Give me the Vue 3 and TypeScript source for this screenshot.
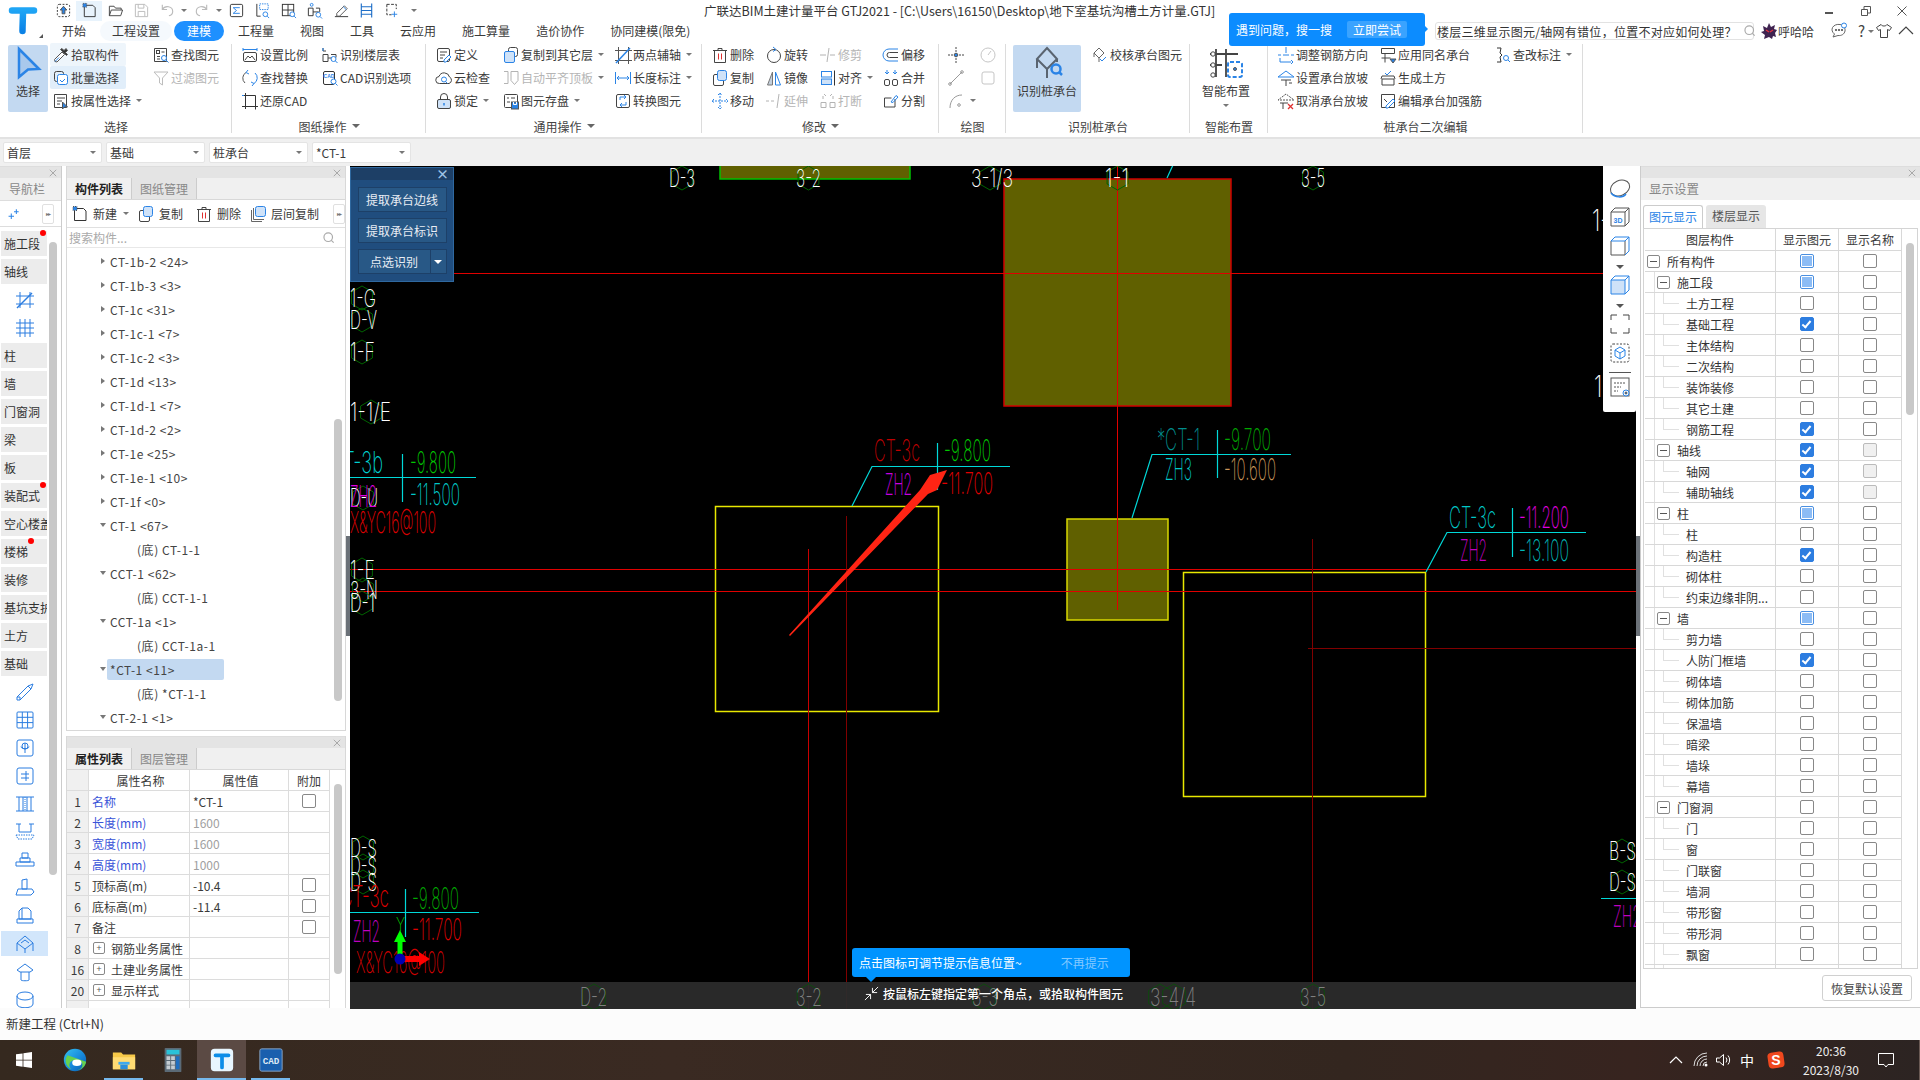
<template>
  <div class="app">
    <!-- title + tabs -->
    <header class="top">
      <div class="logoBox">
        <svg class="logo" viewBox="0 0 32 32" v-html="logoSvg"></svg>
        <i class="logoCaret"></i>
      </div>
      <div class="topCol">
        <div class="quickRow">
          <span v-for="q in quick" :key="q.w + q.i" class="quickCell" :class="{ pale: q.i === 'newDoc' }" :style="{ width: q.w + 'px' }">
            <svg v-if="q.i !== 'caret'" class="ic16" viewBox="0 0 18 18" v-html="icons[q.i]"></svg>
            <i v-else class="miniCaret"></i>
          </span>
          <span class="appTitle">广联达BIM土建计量平台 GTJ2021 - [C:\Users\16150\Desktop\地下室基坑沟槽土方计量.GTJ]</span>
          <div class="winBtns">
            <svg viewBox="0 0 12 12"><path d="M1 8h8" stroke-width="2" /></svg>
            <svg viewBox="0 0 12 12"><path d="M1.500 4.500h6v6h-6zM4 4V1.500h6.500V8H8" /></svg>
            <svg viewBox="0 0 12 12"><path d="M1.500 1.500l9 9M10.500 1.500l-9 9" /></svg>
          </div>
        </div>
        <div class="tabRow">
          <span v-for="t in tabs" :key="t" class="tab" :class="{ on: t === '建模', pale: t === '工程设置' }">{{ t }}</span>
          <div class="tabRight">
            <div class="searchBox">
              <span class="searchText">楼层三维显示图元/轴网有错位，位置不对应如何处理？</span>
              <svg class="ic14" viewBox="0 0 18 18"><circle cx="8" cy="8" r="5.500" stroke="#aaa" stroke-width="1.500" /><path d="M12 12l3 3" stroke="#aaa" stroke-width="1.500" /></svg>
            </div>
            <svg class="ghost" viewBox="0 0 18 18" v-html="ghostSvg"></svg>
            <span class="userName">呼哈哈</span>
            <svg class="ic18 chat" viewBox="0 0 18 18" v-html="icons.chat"></svg>
            <span class="help">?</span><i class="miniCaret helpCaret"></i>
            <svg class="ic18 shirt" viewBox="0 0 18 18" v-html="icons.shirt"></svg>
            <svg class="ic18 fold" viewBox="0 0 18 18"><path d="M2 12l7-7 7 7" stroke="#444" stroke-width="1.200" /></svg>
          </div>
        </div>
      </div>
      <div class="promo">
        <span>遇到问题，搜一搜</span>
        <span class="promoBtn">立即尝试</span>
      </div>
    </header>

    <!-- ribbon -->
    <section class="ribbon">
      <div v-for="g in groups" :key="g.label" class="group" :style="{ width: g.w + 'px' }">
        <div class="groupBody" :style="{ paddingLeft: g.pad + 'px' }">
          <div v-if="g.big" class="bigBtn" :class="{ sel: g.big.sel }" :style="{ width: g.big.w + 'px', marginRight: g.big.mr + 'px' }">
            <svg viewBox="0 0 36 36" v-html="icons[g.big.i]"></svg>
            <span>{{ g.big.t }}</span>
            <i v-if="g.big.caret" class="miniCaret"></i>
          </div>
          <div v-for="(c, ci) in g.cols" :key="ci" class="ribCol" :style="{ width: c.w + 'px' }">
            <div v-for="it in c.items" :key="it.i + it.t" class="ribItem" :class="[it.hl, { dis: it.dis }]" :style="{ width: it.hl ? '76px' : 'auto' }">
              <svg class="ic18" viewBox="0 0 18 18" v-html="icons[it.i]"></svg>
              <span v-if="it.t" class="ribText">{{ it.t }}</span>
              <i v-if="it.caret" class="miniCaret"></i>
            </div>
          </div>
        </div>
        <div class="groupLabel">{{ g.label }}<i v-if="g.caret" class="miniCaret lab"></i></div>
      </div>
    </section>

    <!-- floor / type selects -->
    <section class="pickBar">
      <div v-for="s in selects" :key="s" class="pick"><span>{{ s }}</span><i class="miniCaret"></i></div>
    </section>

    <main class="mainRow">
      <!-- nav column -->
      <aside class="nav">
        <div class="strip"><svg class="closeX" viewBox="0 0 10 10"><path d="M1 1l8 8M9 1l-8 8" /></svg></div>
        <div class="navTitle">导航栏</div>
        <div class="navTool">
          <svg class="ic14" viewBox="0 0 18 18"><path d="M2 12h7M5.500 8.500v7M12 3v6M9 6h6" stroke="#2b84e6" stroke-width="1.300" /></svg>
          <span class="moreBtn">▸▸</span>
        </div>
        <div class="navBody">
          <div class="navList">
            <template v-for="n in navItems" :key="n.k">
              <div v-if="n.t" class="navText">
                <span>{{ n.t }}</span><i v-if="n.dot" class="redDot" :style="{ left: n.dot + 'px' }"></i>
              </div>
              <div v-else class="navIcon" :class="{ on: n.on }">
                <svg viewBox="0 0 20 20" v-html="navIcons[n.i!]"></svg>
              </div>
            </template>
          </div>
          <div class="navTrack"><div class="navThumb"></div></div>
        </div>
      </aside>

      <!-- component + property panels -->
      <div class="leftCol">
        <section class="panel compPanel">
          <div class="strip"><svg class="closeX" viewBox="0 0 10 10"><path d="M1 1l8 8M9 1l-8 8" /></svg></div>
          <div class="tabs2"><span class="t2 on">构件列表</span><span class="t2">图纸管理</span></div>
          <div class="compTool">
            <span class="ctBtn w53"><svg class="ic18" viewBox="0 0 18 18" v-html="icons.newDoc"></svg>新建<i class="miniCaret"></i></span>
            <span class="ctBtn w58"><svg class="ic18" viewBox="0 0 18 18" v-html="icons.copy"></svg>复制</span>
            <span class="ctBtn w55"><svg class="ic18" viewBox="0 0 18 18" v-html="icons.del"></svg>删除</span>
            <span class="ctBtn w82"><svg class="ic18" viewBox="0 0 18 18" v-html="icons.copy2"></svg>层间复制</span>
            <span class="moreBtn">▸▸</span>
          </div>
          <div class="compSearch">
            <span>搜索构件...</span>
            <svg class="ic14" viewBox="0 0 18 18"><circle cx="8" cy="8" r="5.500" stroke="#aaa" stroke-width="1.500" /><path d="M12 12l3 3" stroke="#aaa" stroke-width="1.500" /></svg>
          </div>
          <div class="treeWrap">
            <div class="tree">
              <div v-for="r in treeRows" :key="r.t" class="treeRow" :class="{ child: r.child }">
                <i v-if="r.c" class="tc" :class="r.c"></i>
                <span :class="{ sel: r.sel }">{{ r.t }}</span>
              </div>
            </div>
            <div class="treeThumb"></div>
          </div>
        </section>

        <section class="panel propPanel">
          <div class="strip"><svg class="closeX" viewBox="0 0 10 10"><path d="M1 1l8 8M9 1l-8 8" /></svg></div>
          <div class="tabs2"><span class="t2 on">属性列表</span><span class="t2">图层管理</span></div>
          <div class="propWrap">
            <div class="propTable">
              <div class="propRow head"><span class="pIdx"></span><span class="pName">属性名称</span><span class="pVal">属性值</span><span class="pAdd">附加</span></div>
              <div v-for="p in props2" :key="p.n" class="propRow">
                <span class="pIdx">{{ p.n }}</span>
                <span class="pName" :class="{ blue: p.blue }"><i v-if="p.plus" class="plusBox">+</i>{{ p.name }}</span>
                <span class="pVal" :class="{ grayV: p.gray }">{{ p.val }}</span>
                <span class="pAdd"><i v-if="p.cb" class="cb"></i></span>
              </div>
            </div>
            <div class="propThumb"></div>
          </div>
        </section>
      </div>

      <div class="splitter"><i></i></div>

      <!-- drawing canvas -->
      <section class="canvas">
        <svg class="cad" viewBox="350 166 1286 843">
          <rect x="720" y="160" width="190" height="19" fill="#606000" stroke="#00c000" stroke-width="1.500" />
          <rect x="1004" y="179" width="227" height="227" fill="#606000" stroke="#d00000" stroke-width="1.500" />
          <rect x="1067" y="519" width="101" height="101" fill="#606000" stroke="#d8d800" stroke-width="1.500" />
          <rect x="715.500" y="506.500" width="223" height="205" fill="none" stroke="#e8e800" stroke-width="1.500" />
          <rect x="1183.500" y="572.500" width="242" height="224" fill="none" stroke="#e8e800" stroke-width="1.500" />
          <path d="M350 273.500H1636M350 569.500H1636M350 591.500H1636" stroke="#e00000" stroke-width="1.200" fill="none" />
          <path d="M1117.500 166V610" stroke="#e00000" fill="none" />
          <path d="M808.500 549V1009" stroke="#c80000" fill="none" />
          <path d="M846.500 516V1009M1312.500 539V1009M1308 648.500H1636" stroke="#800000" fill="none" />

          <!-- leaders -->
          <g v-for="(l, i) in leaders" :key="i" fill="none" :stroke="l.c" stroke-width="1.200"><path :d="l.d" /></g>

          <!-- grid bubbles -->
          <g v-for="h in hexes" :key="h.t + h.x + h.y">
            <polygon :points="hexPts(h.hx, h.y, 12)" fill="none" stroke="#006400" />
            <text class="cadText" :x="h.x" :y="h.y + 9" :textLength="h.w" lengthAdjust="spacingAndGlyphs" font-size="25" fill="#fff">{{ h.t }}</text>
          </g>

          <!-- annotation texts -->
          <text v-for="t in cadTexts" :key="t.t + t.x + t.y" class="cadText" :x="t.x" :y="t.y" :textLength="t.w" lengthAdjust="spacingAndGlyphs" font-size="30" :fill="t.c">{{ t.t }}</text>

          <!-- red markup arrow -->
          <polygon points="789,635 920,490 930,475 947,470 937,490 928,494 790,636" fill="#ff2414" />

          <!-- ucs -->
          <text class="cadText" x="396" y="931" textLength="9" lengthAdjust="spacingAndGlyphs" font-size="19" fill="#00d000">Y</text>
          <path d="M397.500 960V942h-3.500l6-12 6 12h-3.500v18z" fill="#00ff00" />
          <path d="M402 956h17v-4l11 7-11 7v-4h-17z" fill="#ff0000" />
          <circle cx="400" cy="959" r="5.500" fill="#0000b0" />

          <!-- bottom strip -->
          <rect x="350" y="982" width="1286" height="27" fill="#2b2b2b" fill-opacity=".95" />
          <g v-for="h in dimHexes" :key="h.t">
            <polygon v-for="hx in h.hx" :key="hx" :points="hexPts(hx, 997, 13)" fill="none" stroke="#0e4a0e" />
            <text class="cadText" :x="h.x" y="1006" :textLength="h.w" lengthAdjust="spacingAndGlyphs" font-size="25" fill="#808080">{{ h.t }}</text>
          </g>
        </svg>

        <!-- cad-recognition float -->
        <div class="floatBox">
          <div class="floatHead">×</div>
          <div class="floatBtn">提取承台边线</div>
          <div class="floatBtn">提取承台标识</div>
          <div class="floatSplit"><span>点选识别</span><span class="floatArrow"><i></i></span></div>
        </div>

        <!-- view toolbar -->
        <div class="viewBar">
          <svg v-for="(v, n) in viewIcons" :key="n" :viewBox="v.vb ?? '0 0 24 24'" :class="v.cls" v-html="icons[v.i]"></svg>
        </div>

        <div class="tip">
          <span>点击图标可调节提示信息位置~</span>
          <span class="tipOff">不再提示</span>
        </div>
        <div class="hint">
          <svg viewBox="0 0 16 16"><path d="M9 7l6-6M9 2v5h5M7 9l-6 6M2 9h5v5" fill="none" stroke="#fff" /></svg>
          <span>按鼠标左键指定第一个角点，或拾取构件图元</span>
        </div>
      </section>

      <div class="splitter"><i></i></div>

      <!-- display settings -->
      <aside class="rightPanel">
        <div class="strip"><svg class="closeX" viewBox="0 0 10 10"><path d="M1 1l8 8M9 1l-8 8" /></svg></div>
        <div class="rpTitle">显示设置</div>
        <div class="rpTabs"><span class="rpTab on">图元显示</span><span class="rpTab">楼层显示</span></div>
        <div class="rpTableBox">
          <div class="rpTable">
            <div class="rpRow rpHead"><span class="rName">图层构件</span><span class="rCell">显示图元</span><span class="rCell">显示名称</span></div>
            <div v-for="(r, i) in layerRows" :key="i" class="rpRow">
              <span class="rName" :class="'lv' + r.lv">
                <i v-if="r.lv < 2" class="minusBox"></i>
                {{ r.t }}
              </span>
              <span class="rCell"><i class="cb" :class="{ chk: r.s === 1, part: r.s === 2 }"></i></span>
              <span class="rCell"><i class="cb" :class="{ off: r.off }"></i></span>
            </div>
          </div>
          <div class="rpThumb"></div>
        </div>
        <div class="rpFoot"><span class="resetBtn">恢复默认设置</span></div>
      </aside>
    </main>

    <footer class="status">新建工程 (Ctrl+N)</footer>

    <!-- windows taskbar -->
    <footer class="taskbar">
      <svg class="win" viewBox="0 0 16 16"><path d="M0 2.300l6.600-.9v6.300H0zM7.400 1.300L16 0v7.700H7.400zM0 8.400h6.600v6.300L0 13.800zM7.400 8.400H16V16l-8.600-1.200z" fill="#fff" /></svg>
      <div class="tbCell"><svg viewBox="0 0 28 28" v-html="edgeSvg"></svg></div>
      <div class="tbCell run"><svg viewBox="0 0 28 28" v-html="folderSvg"></svg></div>
      <div class="tbCell"><svg viewBox="0 0 28 28" v-html="calcSvg"></svg></div>
      <div class="tbCell run active"><svg viewBox="0 0 28 28" v-html="gtjSvg"></svg></div>
      <div class="tbCell run"><svg viewBox="0 0 28 28" v-html="cadSvg"></svg></div>
      <div class="tray">
        <svg class="tr" viewBox="0 0 16 16"><path d="M2 11l6-6 6 6" fill="none" stroke="#fff" stroke-width="1.200" /></svg>
        <svg class="tr net" viewBox="0 0 16 16"><path d="M1 14a13 13 0 0 1 13-13M4 14A10 10 0 0 1 14 4M7 14a7 7 0 0 1 7-7M10 14a4 4 0 0 1 4-4" fill="none" stroke="#ddd" /><circle cx="13" cy="13" r="1.500" fill="#fff" /></svg>
        <svg class="tr" viewBox="0 0 16 16"><path d="M1.500 6h3l4-3.500v11l-4-3.500h-3zM11 5.500a4 4 0 0 1 0 5M13 3.500a7 7 0 0 1 0 9" fill="none" stroke="#fff" /></svg>
        <span class="ime">中</span>
        <svg class="sogou" viewBox="0 0 18 18"><rect x="1" y="1" width="16" height="16" rx="4" fill="#f0481e" transform="rotate(-8 9 9)" /><text x="9" y="14" text-anchor="middle" font-size="14" font-weight="700" fill="#fff" font-family="Liberation Sans">S</text></svg>
        <div class="clock"><span>20:36</span><span>2023/8/30</span></div>
        <svg class="notif" viewBox="0 0 18 18"><path d="M1.500 2.500h15v11H11l-2 2.500-2-2.500H1.500z" fill="none" stroke="#fff" /></svg>
        <i class="peek"></i>
      </div>
    </footer>
  </div>
</template>

<script setup lang="ts">
const B = "#2b84e6";
const L = "#cfe2f8";

const icons: Record<string, string> = {
  up: `<rect x="2.500" y="2.500" width="13" height="13" rx="2" stroke="#333" stroke-dasharray="2 1.500"/><path d="M9 4.500l3.500 4h-2v4h-3v-4h-2z" fill="${B}"/>`,
  newDoc: `<path d="M3.500 3.500h9l2.500 2.500v9.500h-11.500z" stroke="#333"/><rect x="2" y="1.500" width="4" height="4" fill="${B}" stroke-dasharray="1 1"/>`,
  open: `<path d="M2.500 14.500v-10h5l1.500 2h6v2M2.500 14.500l2-6h12l-2 6z" stroke="#444"/>`,
  save: `<path d="M2.500 2.500h10l3 3v10h-13zM5.500 2.500v4h6v-4M5.500 15v-5h7v5" stroke="#bbb"/>`,
  undo: `<path d="M3.500 3v5h5M3.500 8c3-5 11-3.500 11 2 0 2-1.500 4-4 4.500" stroke="#bbb" stroke-width="1.200"/>`,
  redo: `<path d="M14.500 3v5h-5M14.500 8c-3-5-11-3.500-11 2 0 2 1.500 4 4 4.500" stroke="#bbb" stroke-width="1.200"/>`,
  sigma: `<rect x="2.500" y="2.500" width="13" height="13" rx="1.500" stroke="#333"/><path d="M12.500 6h-7l3.500 3-3.500 3h7" stroke="${B}"/>`,
  calcTbl: `<path d="M3 2v13h4" stroke="#333"/><rect x="6" y="2" width="9" height="6" stroke="${B}" stroke-dasharray="1.500 1"/><circle cx="12" cy="13" r="2.500" stroke="${B}"/><path d="M14 15l2 2" stroke="${B}"/>`,
  tblQ: `<rect x="2.500" y="2.500" width="12" height="12" stroke="#333"/><path d="M2.500 8.500h12M8.500 2.500v12" stroke="#333"/><circle cx="13" cy="13" r="2.500" fill="#fff" stroke="${B}"/><path d="M15 15l2 2" stroke="${B}"/>`,
  tblQ2: `<path d="M2.500 6.500h5v8h-5zM7.500 10.500h6M10.500 6.500h4v4" stroke="#333"/><circle cx="6" cy="3" r="1.500" stroke="${B}"/><circle cx="13" cy="13.500" r="2.500" stroke="${B}"/><path d="M15 15.500l2 2" stroke="${B}"/>`,
  pen: `<path d="M2 15.500h14" stroke="#333"/><path d="M4 12l8-8 3 3-8 8H4z" stroke="#555"/><path d="M11 5l3 3" stroke="${B}"/>`,
  ruler: `<path d="M3.500 1.500v15M14.500 1.500v15M3.500 5h11M3.500 9h11M3.500 13h11" stroke="#1f6fc8" stroke-width="1.200"/>`,
  frameQ: `<path d="M3 2.500h10v5M3 2.500v11h5" stroke="#333" stroke-dasharray="3 1.500"/><path d="M11 10v6M8 13h6" stroke="${B}"/>`,
  chat: `<path d="M3 15l1.500-3C2 10 1.500 8 2.500 5.500 4 3 7 2 10 2.500c3.500.7 5.500 3.500 5 6.500-.5 3-3.500 5-7 4.500z" stroke="#666"/><circle cx="6" cy="8" r=".7" fill="#666"/><circle cx="9" cy="8" r=".7" fill="#666"/><circle cx="12" cy="8" r=".7" fill="#666"/><circle cx="14" cy="3.500" r="2.500" fill="#fff" stroke="${B}"/>`,
  shirt: `<path d="M6 2.500L1.500 5.500l2 3 2-1v8h7v-8l2 1 2-3-4.500-3c-1 2-5 2-6 0z" stroke="#444"/>`,
  pick: `<path d="M3 15.500l-.5-2 7.500-7.500 2.500 2.500-7.500 7.500z" fill="#fff" stroke="#555"/><path d="M8.500 3.500l6 6 1-1-2-2 2-2-1.500-2-2 2-2-2z" fill="#333"/><path d="M3 15.500l4-4" stroke="${B}"/>`,
  batch: `<rect x="2.500" y="2.500" width="9" height="10" rx="2" stroke="#444"/><rect x="5.500" y="5.500" width="10" height="10" rx="2" fill="#fff" stroke="${B}"/><path d="M8 11l2 2 3-3" stroke="${B}"/>`,
  attr: `<path d="M2.500 2.500h12v13h-12z" stroke="#444"/><path d="M5 6h8M5 9h5M5 12h3" stroke="#444"/><path d="M10.500 10v7l2-2h3z" fill="${B}"/>`,
  find: `<path d="M2.500 2.500h12v13h-12z" stroke="#444"/><rect x="4.500" y="4.500" width="3" height="3" stroke="#444"/><path d="M9.500 6h3M5 10.500h3M5 13h3" stroke="#444"/><circle cx="12" cy="12" r="2.500" fill="#fff" stroke="${B}"/><path d="M14 14l2.500 2.500" stroke="${B}"/>`,
  filter: `<path d="M2 3h14l-5.500 6v7l-3-2V9z" stroke="#888"/>`,
  scale: `<path d="M2 2v3M16 2v3M2 3.500h14" stroke="${B}"/><rect x="2.500" y="6.500" width="13" height="9" rx="1.500" stroke="#444"/><path d="M4 14l3-4 2 2 2-2 3 4" stroke="#444"/>`,
  floorT: `<path d="M2 2v3h3M2 8.500h5v7H2zM7 12h6M10 8.500h5v3" stroke="#444"/><path d="M2 5V2" stroke="${B}"/><circle cx="12.500" cy="13" r="2.500" fill="#fff" stroke="${B}"/><path d="M14.500 15l2 2" stroke="${B}"/>`,
  replace: `<path d="M5 3.500a6.500 6.500 0 0 0-1 10.500" stroke="#555"/><path d="M13 14.500a6.500 6.500 0 0 0 1-10.500" stroke="${B}"/><path d="M7 1L5 3.500 8 5M11 17l2-2.500L10 13" stroke="${B}"/>`,
  cadOpt: `<rect x="2.500" y="2.500" width="11" height="13" rx="1.500" stroke="#333"/><circle cx="12.500" cy="12.500" r="2.500" fill="#fff" stroke="${B}"/><path d="M14.500 14.500l2 2" stroke="${B}"/><text x="8" y="8.500" font-size="5" font-weight="700" text-anchor="middle" fill="${B}" stroke="none" font-family="Liberation Sans">CAD</text>`,
  restore: `<path d="M1 14.500h16M4.500 1v16M3 3.500h11.500v14" stroke="#333"/><path d="M1 3.500h2" stroke="${B}"/>`,
  def: `<rect x="2.500" y="2.500" width="12" height="13" rx="1.500" stroke="#444"/><path d="M5 6h7M5 9h5M5 12h3" stroke="#444"/><path d="M9 14l5-5 2 2-5 5H9z" fill="#fff" stroke="${B}"/>`,
  cloud: `<path d="M4.500 14.500a3.500 3.500 0 0 1-.5-7A5.500 5.500 0 0 1 14.500 8 3.500 3.500 0 0 1 14 14.500z" stroke="#444"/><circle cx="9" cy="10.500" r="2.500" stroke="${B}"/><path d="M10.500 12.500l2 2" stroke="${B}"/>`,
  lock: `<rect x="2.500" y="7.500" width="13" height="9" rx="1.500" fill="${L}" stroke="#444"/><path d="M5.500 7.500V5a3.500 3.500 0 0 1 7 0v2.500" stroke="#444"/><path d="M9 11v2.500" stroke="${B}" stroke-width="1.500"/>`,
  copyTo: `<rect x="6.500" y="1.500" width="9" height="9" rx="2" stroke="#444"/><rect x="2.500" y="5.500" width="10" height="11" rx="1.500" fill="${L}" stroke="${B}"/>`,
  alignTop: `<path d="M2 2.500h4v12H2M9 2.500h7v9l-3.500 4-3.500-4z" stroke="#777"/>`,
  save2: `<rect x="2.500" y="2.500" width="13" height="13" rx="1" stroke="#444"/><path d="M5 6h2M9 6h4M5 10h3" stroke="#444"/><rect x="9.500" y="10" width="7" height="7" fill="${B}"/><path d="M11.500 10v2.500h3V10" stroke="#fff"/>`,
  twoAxis: `<path d="M4.500 1v17M14.500 1v17M1 4.500h17M1 14.500h17" stroke="#555"/><path d="M2 17L16 2" stroke="${B}" stroke-width="1.500"/>`,
  dim: `<path d="M1.500 3v12M16.500 3v12M3 9h12M5 7L3 9l2 2M13 7l2 2-2 2" stroke="${B}"/>`,
  convert: `<rect x="2.500" y="2.500" width="13" height="13" rx="1.500" stroke="#444"/><path d="M6 5h6M6 5v3M12 13H6M12 13v-3" stroke="${B}"/><path d="M10 7l2-2-2-2M8 11l-2 2 2 2" stroke="${B}"/>`,
  del: `<path d="M2 4.500h14M7 4.500V2.500h4v2M3.500 4.500v12h11v-12" stroke="#444"/><path d="M7.500 7.500v6M10.500 7.500v6" stroke="#e03030"/>`,
  copy: `<rect x="2.500" y="5.500" width="10" height="11" rx="1.500" stroke="#444"/><rect x="6.500" y="1.500" width="9" height="10" rx="2" fill="${L}" stroke="${B}"/>`,
  copy2: `<path d="M2.500 5v11.500H13M4.500 3v11.500H15" stroke="#666"/><rect x="6.500" y="1.500" width="10" height="10" rx="2" fill="${L}" stroke="${B}"/>`,
  move: `<path d="M9 1v16M1 9h16M7 3l2-2 2 2M7 15l2 2 2-2M3 7L1 9l2 2M15 7l2 2-2 2" stroke="${B}" stroke-dasharray="2 1"/>`,
  rotate: `<circle cx="9" cy="10" r="6.500" stroke="#444"/><path d="M8 1l3 2.500L8 5.500" stroke="${B}"/>`,
  mirror: `<path d="M7.500 3l-5 13h5z" fill="#c3cfdc" stroke="#777"/><path d="M10.500 3l5 13h-5z" stroke="${B}"/>`,
  extend: `<path d="M1 9h3M6 9h3M14 2l-2 14" stroke="#777"/>`,
  trim: `<path d="M1 9h6M10 2L8 16M11 9h5" stroke="#777"/>`,
  align: `<rect x="2.500" y="2.500" width="10" height="5.500" stroke="${B}"/><rect x="2.500" y="10" width="10" height="5.500" fill="${L}" stroke="${B}"/><path d="M15.500 1.500v15" stroke="#333"/>`,
  breakI: `<path d="M2 10.500h5v5H2zM11 10.500h5v5h-5zM4 7V4M14 7V4M7 4l-2-2M11 4l2-2" stroke="#777"/>`,
  offset: `<path d="M16 3H7a6 6 0 0 0 0 12h9" stroke="${B}"/><path d="M16 6.500H7.500a2.500 2.500 0 0 0 0 5H16" stroke="#444"/>`,
  merge: `<rect x="2.500" y="10.500" width="5" height="6" rx="1.500" stroke="#444"/><rect x="10.500" y="10.500" width="5" height="6" rx="1.500" stroke="#444"/><path d="M3 3l2 2 2-2M11 3l2 2 2-2M5 1v4M13 1v4" stroke="${B}"/>`,
  split: `<path d="M13 7v8H2.500V6h7" stroke="#444"/><path d="M9 10l5-6.500 2 1.500-5 5.500z" stroke="${B}"/>`,
  point: `<path d="M9 1v5M9 12v5M1 9h5M12 9h5" stroke="#444" stroke-dasharray="2 1"/><circle cx="9" cy="9" r="1.800" fill="${B}"/>`,
  clock: `<circle cx="9" cy="9" r="7" stroke="#999"/><path d="M9 9l3-4" stroke="#999"/>`,
  line: `<path d="M3 15L15 3" stroke="#999"/><circle cx="3" cy="15" r="1.300" stroke="#999"/><circle cx="15" cy="3" r="1.300" stroke="#999"/>`,
  rect: `<rect x="3" y="3" width="12" height="12" rx="2" stroke="#999"/>`,
  arc: `<path d="M3 16C3 8 8 3 15 3" stroke="#999"/><circle cx="12" cy="13" r="1.300" stroke="#999"/>`,
  pile: `<path d="M18 3l10 11-10 10L8 14z" stroke="#5a6470" stroke-width="2"/><path d="M8 14v9M18 24v9M28 14v3" stroke="#5a6470" stroke-width="2"/><circle cx="27" cy="24" r="4.500" stroke="${B}" stroke-width="2.500"/><path d="M30 27l3 3" stroke="${B}" stroke-width="2.500"/>`,
  check: `<path d="M8 2l5 5-5 5-5-5z" stroke="#666"/><path d="M3 7v4M8 12v4" stroke="#666"/><path d="M9 13l2 2 4-4" stroke="${B}"/>`,
  smart: `<path d="M8 4v28M18 4v28M2 9h28M2 20h12" stroke="#444" stroke-width="1.800"/><circle cx="5" cy="9" r="2.200" fill="#fff" stroke="#444"/><circle cx="5" cy="20" r="2.200" fill="#fff" stroke="#444"/><circle cx="5" cy="30" r="2.200" fill="#fff" stroke="#444"/><rect x="20" y="17" width="14" height="15" rx="2" fill="#fff" stroke="${B}" stroke-width="2" stroke-dasharray="4 2"/><circle cx="27" cy="24" r="1.500" fill="${B}"/>`,
  arrow: `<path d="M9 4l20 20-11 .5-9 7.500z" fill="#a9c8ec" stroke="${B}" stroke-width="2.500"/>`,
  adjust: `<path d="M9 1v6M6 9h6M1 9h3M14 9h3" stroke="${B}"/><path d="M3 12v4h11M14 14l2 2-2 2" stroke="${B}"/>`,
  slope: `<path d="M9 2L1 8h16z" stroke="${B}"/><path d="M4 11h10M9 11v6M12 14l3 0" stroke="#444"/>`,
  slopeX: `<path d="M9 2L1 8h16z" stroke="#555" stroke-dasharray="2 1"/><path d="M3 11h8M6 11v6" stroke="#444"/><path d="M11 12l5 5M16 12l-5 5" stroke="#e03030" stroke-width="1.300"/>`,
  sameName: `<path d="M2.500 2.500h13v5h-13zM6 7.500v9M2.500 12h9" stroke="#444"/><path d="M11 13h6l-3 4z" fill="${B}"/>`,
  earth: `<path d="M3 10h12v6H3zM2 10l1-3h12l1 3" stroke="#444"/><path d="M6 4l2 2 4-4" stroke="${B}"/>`,
  strength: `<path d="M6 2.500h9.500v13H6M6 2.500H2.500v13H6" stroke="#444"/><path d="M7 14l7-7 2 2-7 7H7z" fill="#fff" stroke="${B}"/><path d="M5 7l3 3" stroke="#444"/>`,
  mark: `<path d="M3 2h4l-1 5 2 2-2 2 1 5H3" stroke="#333"/><circle cx="12" cy="12" r="2.500" stroke="${B}"/><path d="M14 14l2 2" stroke="${B}"/>`,
  v1: `<ellipse cx="12" cy="12" rx="10" ry="7.500" transform="rotate(-25 12 12)" stroke="#555"/><path d="M3 17c4 5 12 5 15 1" stroke="${B}" stroke-width="1.500"/>`,
  v2: `<path d="M3 7l4-4h14v14l-4 4H3zM3 7h14v14M17 7l4-4" stroke="#555"/><text x="10" y="18" font-size="7" font-weight="700" text-anchor="middle" fill="${B}" stroke="none" font-family="Liberation Sans">3D</text>`,
  v3: `<path d="M3 7v14h14V7" stroke="#555"/><path d="M3 7l4-4h14v14l-4 4" stroke="${B}"/><path d="M3 7h14M17 7l4-4" stroke="${B}"/>`,
  vCaret: `<path d="M8 10h8l-4 4z" fill="#555" stroke="none"/>`,
  v4: `<path d="M3 7h14v14H3z" fill="${L}" stroke="${B}"/><path d="M3 7l4-4h14v14l-4 4M17 7l4-4" stroke="${B}"/>`,
  v5: `<path d="M3 8V3h6M15 3h6v5M21 16v5h-6M9 21H3v-5" stroke="#444"/>`,
  v6: `<rect x="3" y="3" width="18" height="18" rx="2" stroke="#444" stroke-dasharray="2 1.500"/><path d="M12 6l5 3v6l-5 3-5-3V9zM7 9l5 3 5-3M12 12v6" stroke="${B}"/>`,
  v7: `<rect x="3" y="3" width="18" height="18" stroke="#555"/><path d="M6 8h12M6 12h7M6 16h4" stroke="#555" stroke-dasharray="2 1"/><circle cx="18" cy="18" r="3" fill="#fff" stroke="${B}"/><circle cx="18" cy="18" r="1" fill="${B}"/>`,
  vLine: `<path d="M1 12.500h22" stroke="#555"/>`,
};

const navIcons: Record<string, string> = {
  axis1: `<path d="M1 6h18M1 14h18M5 2v16M15 2v16" /><path d="M2 18L17 3" stroke-width="1.400"/>`,
  axis2: `<path d="M1 5h18M1 10h18M1 15h18M5 1v18M10 1v18M15 1v18" />`,
  bar: `<path d="M2 15L13 4l5-2-2 5L5 18H2zM2 15h3v3M13 4l3 3" />`,
  cells: `<rect x="2" y="2" width="16" height="16" rx="1"/><path d="M2 7.300h16M2 12.600h16M7.300 2v16M12.600 2v16"/>`,
  turn: `<rect x="2" y="2" width="16" height="16" rx="2"/><path d="M10 5v10M6 8.500c0 3 8 3 8 0"/><circle cx="10" cy="8" r="3"/>`,
  cross: `<rect x="2" y="2" width="16" height="16" rx="2"/><path d="M6 8h8M6 12h8M11 5v10"/>`,
  cols: `<path d="M1 3h18M1 17h18M4 3v14M16 3v14M8 3v14M12 3v14" /><path d="M10 3v14" stroke-dasharray="1 1"/>`,
  trough: `<path d="M4 2v8h12V2M1 2h5M14 2h5"/><path d="M1 13h18l-2 4H3z" stroke-dasharray="1.500 1"/>`,
  ped: `<path d="M7 3h6v5H7zM5 8h10v4H5zM1 12h18v4H1z"/>`,
  ped2: `<path d="M7 2l5-1v10H7zM3 11h14l2 3-3 3H1z"/>`,
  ped3: `<path d="M7 2h6l3 3v8H4V5zM2 13h16v4H2zM7 2v11"/>`,
  cap: `<path d="M10 2l8 7-8 6-8-6zM2 9v8M10 15v4M18 9v8"/><path d="M6 9l4-3 4 3"/>`,
  mush: `<path d="M2 8l8-6 8 6-3 2H5zM6 10v8c0 1 8 1 8 0v-8"/>`,
  cyl: `<ellipse cx="10" cy="6" rx="8" ry="4"/><path d="M2 6v8c0 5 16 5 16 0V6"/>`,
};

const logoSvg = `<defs><linearGradient id="tg" x1="0" y1="0" x2="0" y2="1"><stop offset="0" stop-color="#1fa5f5"/><stop offset="1" stop-color="#0b82e6"/></linearGradient></defs><path d="M5 7.500h22M16 8c0 7-.5 13-.5 20" fill="none" stroke="url(#tg)" stroke-width="6.500" stroke-linecap="round"/>`;
const ghostSvg = `<path d="M4 17l1-4-4-3 3-1-1-5 4 2 2-5 2 4 4-2-1 4 3 1-2 3 1 4-3-1-1 3-3-2z" fill="#3f2350"/><path d="M6 8l3 2M13 8l-3 2" stroke="#e03040" stroke-width="1.400"/>`;
const edgeSvg = `<defs><linearGradient id="eg" x1="0" y1="0" x2="1" y2="1"><stop offset="0" stop-color="#35c1f1"/><stop offset=".6" stop-color="#1483d8"/><stop offset="1" stop-color="#0c59a4"/></linearGradient></defs><circle cx="14" cy="14" r="12" fill="url(#eg)"/><path d="M26 16c-1 6-7 10-12 9 4 0 8-2 8-6 0-3-3-5-7-5-4 0-7 2-7 5 0 1 0 3 2 5-6-3-8-10-4-15" fill="#67d24e"/><ellipse cx="16" cy="17" rx="5" ry="3.500" fill="#fff"/>`;
const folderSvg = `<path d="M2 6h9l2 2h13v16H2z" fill="#f7c948"/><path d="M2 11h24v13H2z" fill="#ffdc73"/><path d="M10 19h8v5h-8z" fill="#2a8fdc"/><path d="M8 16h12v3H8z" fill="#3da9ee"/>`;
const calcSvg = `<rect x="5" y="1" width="18" height="26" rx="1" fill="#5b6a76"/><rect x="7" y="3" width="14" height="5" fill="#29c2d8"/><path d="M7 10h4v4H7zM12 10h4v4h-4zM7 15h4v4H7zM12 15h4v4h-4zM7 20h4v4H7zM12 20h4v4h-4z" fill="#c4ccd2"/><path d="M17 10h4v14h-4z" fill="#1f6fc0"/>`;
const gtjSvg = `<rect x="2" y="2" width="24" height="24" rx="4" fill="#e8f6ff"/><path d="M7 9h14M14 9v13" stroke="#0c8de8" stroke-width="4" stroke-linecap="round" fill="none"/>`;
const cadSvg = `<rect x="2" y="2" width="24" height="24" rx="2" fill="#1a5fae" stroke="#8aa6c6"/><text x="14" y="18" font-size="10" font-weight="700" text-anchor="middle" fill="#dfe9f5" font-family="Liberation Mono">CAD</text>`;

const quick = [
  { i: "up", w: 26 }, { i: "newDoc", w: 26 }, { i: "open", w: 26 }, { i: "save", w: 26 }, { i: "undo", w: 26 },
  { i: "caret", w: 8 }, { i: "redo", w: 26 }, { i: "caret", w: 10 }, { i: "sigma", w: 24 }, { i: "calcTbl", w: 28 },
  { i: "tblQ", w: 24 }, { i: "tblQ2", w: 28 }, { i: "pen", w: 26 }, { i: "ruler", w: 25 }, { i: "frameQ", w: 26 }, { i: "caret", w: 18 },
];

const tabs = ["开始", "工程设置", "建模", "工程量", "视图", "工具", "云应用", "施工算量", "造价协作", "协同建模(限免)"];

type RibItem = { t: string; i: string; dis?: boolean; caret?: boolean; hl?: string };
type RibCol = { w: number; items: RibItem[] };
type RibGroup = {
  label: string; caret?: boolean; w: number; pad: number;
  big?: { t: string; i: string; w: number; mr: number; sel?: boolean; caret?: boolean };
  cols: RibCol[];
};

const groups: RibGroup[] = [
  {
    label: "选择", w: 232, pad: 8,
    big: { t: "选择", i: "arrow", w: 40, mr: 2, sel: true },
    cols: [
      { w: 100, items: [{ t: "拾取构件", i: "pick", hl: "hl1" }, { t: "批量选择", i: "batch", hl: "hl2" }, { t: "按属性选择", i: "attr", caret: true }] },
      { w: 80, items: [{ t: "查找图元", i: "find" }, { t: "过滤图元", i: "filter", dis: true }] },
    ],
  },
  {
    label: "图纸操作", caret: true, w: 194, pad: 7,
    cols: [
      { w: 80, items: [{ t: "设置比例", i: "scale" }, { t: "查找替换", i: "replace" }, { t: "还原CAD", i: "restore" }] },
      { w: 100, items: [{ t: "识别楼层表", i: "floorT" }, { t: "CAD识别选项", i: "cadOpt" }] },
    ],
  },
  {
    label: "通用操作", caret: true, w: 276, pad: 7,
    cols: [
      { w: 67, items: [{ t: "定义", i: "def" }, { t: "云检查", i: "cloud" }, { t: "锁定", i: "lock", caret: true }] },
      { w: 112, items: [{ t: "复制到其它层", i: "copyTo", caret: true }, { t: "自动平齐顶板", i: "alignTop", dis: true, caret: true }, { t: "图元存盘", i: "save2", caret: true }] },
      { w: 88, items: [{ t: "两点辅轴", i: "twoAxis", caret: true }, { t: "长度标注", i: "dim", caret: true }, { t: "转换图元", i: "convert" }] },
    ],
  },
  {
    label: "修改", caret: true, w: 237, pad: 7,
    cols: [
      { w: 54, items: [{ t: "删除", i: "del" }, { t: "复制", i: "copy" }, { t: "移动", i: "move" }] },
      { w: 54, items: [{ t: "旋转", i: "rotate" }, { t: "镜像", i: "mirror" }, { t: "延伸", i: "extend", dis: true }] },
      { w: 63, items: [{ t: "修剪", i: "trim", dis: true }, { t: "对齐", i: "align", caret: true }, { t: "打断", i: "breakI", dis: true }] },
      { w: 55, items: [{ t: "偏移", i: "offset" }, { t: "合并", i: "merge" }, { t: "分割", i: "split" }] },
    ],
  },
  {
    label: "绘图", w: 67, pad: 6,
    cols: [
      { w: 32, items: [{ t: "", i: "point" }, { t: "", i: "line" }, { t: "", i: "arc", caret: true }] },
      { w: 24, items: [{ t: "", i: "clock", dis: true }, { t: "", i: "rect", dis: true }] },
    ],
  },
  {
    label: "识别桩承台", w: 184, pad: 7,
    big: { t: "识别桩承台", i: "pile", w: 68, mr: 8, sel: true },
    cols: [{ w: 96, items: [{ t: "校核承台图元", i: "check" }] }],
  },
  {
    label: "智能布置", w: 78, pad: 6,
    big: { t: "智能布置", i: "smart", w: 60, mr: 0, caret: true },
    cols: [],
  },
  {
    label: "桩承台二次编辑", w: 315, pad: 7,
    cols: [
      { w: 102, items: [{ t: "调整钢筋方向", i: "adjust" }, { t: "设置承台放坡", i: "slope" }, { t: "取消承台放坡", i: "slopeX" }] },
      { w: 115, items: [{ t: "应用同名承台", i: "sameName" }, { t: "生成土方", i: "earth" }, { t: "编辑承台加强筋", i: "strength" }] },
      { w: 88, items: [{ t: "查改标注", i: "mark", caret: true }] },
    ],
  },
];

const selects = ["首层", "基础", "桩承台", "*CT-1"];

type NavItem = { k: string; t?: string; dot?: number; i?: string; on?: boolean };
const navItems: NavItem[] = [
  { k: "a", t: "施工段", dot: 39 }, { k: "b", t: "轴线" }, { k: "c", i: "axis1" }, { k: "d", i: "axis2" },
  { k: "e", t: "柱" }, { k: "f", t: "墙" }, { k: "g", t: "门窗洞" }, { k: "h", t: "梁" }, { k: "i", t: "板" },
  { k: "j", t: "装配式", dot: 39 }, { k: "k", t: "空心楼盖" }, { k: "l", t: "楼梯", dot: 27 }, { k: "m", t: "装修" },
  { k: "n", t: "基坑支护" }, { k: "o", t: "土方" }, { k: "p", t: "基础" },
  { k: "q", i: "bar" }, { k: "r", i: "cells" }, { k: "s", i: "turn" }, { k: "t", i: "cross" }, { k: "u", i: "cols" },
  { k: "v", i: "trough" }, { k: "w", i: "ped" }, { k: "x", i: "ped2" }, { k: "y", i: "ped3" },
  { k: "z", i: "cap", on: true }, { k: "z1", i: "mush" }, { k: "z2", i: "cyl" },
];

const treeRows = [
  { t: "CT-1b-2 <24>", c: "r" }, { t: "CT-1b-3 <3>", c: "r" }, { t: "CT-1c <31>", c: "r" }, { t: "CT-1c-1 <7>", c: "r" },
  { t: "CT-1c-2 <3>", c: "r" }, { t: "CT-1d <13>", c: "r" }, { t: "CT-1d-1 <7>", c: "r" }, { t: "CT-1d-2 <2>", c: "r" },
  { t: "CT-1e <25>", c: "r" }, { t: "CT-1e-1 <10>", c: "r" }, { t: "CT-1f <0>", c: "r" }, { t: "CT-1 <67>", c: "d" },
  { t: "(底) CT-1-1", child: true }, { t: "CCT-1 <62>", c: "d" }, { t: "(底) CCT-1-1", child: true }, { t: "CCT-1a <1>", c: "d" },
  { t: "(底) CCT-1a-1", child: true }, { t: "*CT-1 <11>", c: "d", sel: true }, { t: "(底) *CT-1-1", child: true }, { t: "CT-2-1 <1>", c: "d" },
];

const props2 = [
  { n: "1", name: "名称", val: "*CT-1", blue: true, cb: true },
  { n: "2", name: "长度(mm)", val: "1600", blue: true, gray: true },
  { n: "3", name: "宽度(mm)", val: "1600", blue: true, gray: true },
  { n: "4", name: "高度(mm)", val: "1000", blue: true, gray: true },
  { n: "5", name: "顶标高(m)", val: "-10.4", cb: true },
  { n: "6", name: "底标高(m)", val: "-11.4", cb: true },
  { n: "7", name: "备注", val: "", cb: true },
  { n: "8", name: "钢筋业务属性", val: "", plus: true },
  { n: "16", name: "土建业务属性", val: "", plus: true },
  { n: "20", name: "显示样式", val: "", plus: true },
  { n: "", name: "", val: "" },
];

const layerRows: { t: string; lv: number; s: number; off?: boolean }[] = [
  { t: "所有构件", lv: 0, s: 2 }, { t: "施工段", lv: 1, s: 2 }, { t: "土方工程", lv: 2, s: 0 }, { t: "基础工程", lv: 2, s: 1 },
  { t: "主体结构", lv: 2, s: 0 }, { t: "二次结构", lv: 2, s: 0 }, { t: "装饰装修", lv: 2, s: 0 }, { t: "其它土建", lv: 2, s: 0 },
  { t: "钢筋工程", lv: 2, s: 1 }, { t: "轴线", lv: 1, s: 1, off: true }, { t: "轴网", lv: 2, s: 1, off: true }, { t: "辅助轴线", lv: 2, s: 1, off: true },
  { t: "柱", lv: 1, s: 2 }, { t: "柱", lv: 2, s: 0 }, { t: "构造柱", lv: 2, s: 1 }, { t: "砌体柱", lv: 2, s: 0 },
  { t: "约束边缘非阴...", lv: 2, s: 0 }, { t: "墙", lv: 1, s: 2 }, { t: "剪力墙", lv: 2, s: 0 }, { t: "人防门框墙", lv: 2, s: 1 },
  { t: "砌体墙", lv: 2, s: 0 }, { t: "砌体加筋", lv: 2, s: 0 }, { t: "保温墙", lv: 2, s: 0 }, { t: "暗梁", lv: 2, s: 0 },
  { t: "墙垛", lv: 2, s: 0 }, { t: "幕墙", lv: 2, s: 0 }, { t: "门窗洞", lv: 1, s: 0 }, { t: "门", lv: 2, s: 0 },
  { t: "窗", lv: 2, s: 0 }, { t: "门联窗", lv: 2, s: 0 }, { t: "墙洞", lv: 2, s: 0 }, { t: "带形窗", lv: 2, s: 0 },
  { t: "带形洞", lv: 2, s: 0 }, { t: "飘窗", lv: 2, s: 0 }, { t: "", lv: 2, s: 0 },
];

const viewIcons: { i: string; cls?: string; vb?: string }[] = [
  { i: "v1" }, { i: "v2" }, { i: "v3" }, { i: "vCaret", cls: "thin", vb: "0 8 24 8" }, { i: "v4" }, { i: "vCaret", cls: "thin", vb: "0 8 24 8" },
  { i: "v5" }, { i: "v6" }, { i: "vLine", cls: "rule", vb: "0 10 24 5" }, { i: "v7" },
];

function hexPts(cx: number, cy: number, r: number) {
  const pts: string[] = [];
  for (let a = 0; a < 6; a++) {
    const rad = (Math.PI / 3) * a + Math.PI / 6;
    pts.push(`${(cx + r * Math.cos(rad)).toFixed(1)},${(cy + r * Math.sin(rad)).toFixed(1)}`);
  }
  return pts.join(" ");
}

const hexes = [
  { t: "D-3", x: 669, w: 26, hx: 682, y: 178 }, { t: "3-2", x: 796, w: 25, hx: 808.5, y: 178 },
  { t: "3-1/3", x: 971, w: 42, hx: 990, y: 178 }, { t: "1-1", x: 1105, w: 24, hx: 1117.5, y: 178 },
  { t: "3-5", x: 1301, w: 24, hx: 1313, y: 178 },
  { t: "1-G", x: 350, w: 26, hx: 362, y: 298 }, { t: "D-V", x: 350, w: 27, hx: 362, y: 320 },
  { t: "1-F", x: 350, w: 25, hx: 362, y: 352 }, { t: "1-1/E", x: 350, w: 41, hx: 371, y: 412 },
  { t: "D-U", x: 350, w: 28, hx: 363, y: 498 }, { t: "1-E", x: 350, w: 25, hx: 362, y: 570 },
  { t: "3-N", x: 350, w: 28, hx: 363, y: 590 }, { t: "D-1", x: 350, w: 25, hx: 362, y: 603 },
  { t: "D-S", x: 350, w: 27, hx: 363, y: 848 }, { t: "D-S", x: 350, w: 27, hx: 363, y: 866 },
  { t: "D-S", x: 350, w: 27, hx: 363, y: 882 },
  { t: "B-S", x: 1609, w: 27, hx: 1622, y: 851 }, { t: "D-S", x: 1609, w: 27, hx: 1622, y: 882 },
];

const dimHexes = [
  { t: "D-2", x: 580, w: 27, hx: [594] }, { t: "3-2", x: 796, w: 26, hx: [808.5] }, { t: "3-3", x: 972, w: 26, hx: [984] },
  { t: "3-4/4", x: 1150, w: 46, hx: [1160, 1174] }, { t: "3-5", x: 1300, w: 26, hx: [1313] },
];

const cadTexts = [
  { t: "CT-3b", x: 330, y: 473, w: 53, c: "#00d0d0" }, { t: "-9.800", x: 410, y: 473, w: 46, c: "#00c800" },
  { t: "-11.500", x: 410, y: 505, w: 50, c: "#00c8c8" }, { t: "ZH2", x: 350, y: 507, w: 27, c: "#e000e0" },
  { t: "X&YC16@100", x: 350, y: 533, w: 86, c: "#e00000" },
  { t: "CT-3c", x: 874, y: 461, w: 46, c: "#c00000" }, { t: "-9.800", x: 944, y: 461, w: 47, c: "#00c800" },
  { t: "ZH2", x: 885, y: 495, w: 27, c: "#c800e0" }, { t: "-11.700", x: 941, y: 494, w: 52, c: "#e00000" },
  { t: "*CT-1", x: 1157, y: 450, w: 43, c: "#008c8c" }, { t: "-9.700", x: 1224, y: 450, w: 47, c: "#00a800" },
  { t: "ZH3", x: 1165, y: 480, w: 27, c: "#00c8c8" }, { t: "-10.600", x: 1224, y: 480, w: 52, c: "#c8965a" },
  { t: "CT-3c", x: 1449, y: 528, w: 47, c: "#00c8c8" }, { t: "-11.200", x: 1519, y: 528, w: 50, c: "#e000e0" },
  { t: "ZH2", x: 1460, y: 561, w: 27, c: "#c000c0" }, { t: "-13.100", x: 1519, y: 561, w: 50, c: "#00b8b8" },
  { t: "CT-3c", x: 340, y: 907, w: 49, c: "#e00000" }, { t: "-9.800", x: 412, y: 909, w: 47, c: "#00a800" },
  { t: "ZH2", x: 353, y: 942, w: 27, c: "#c000c0" }, { t: "-11.700", x: 412, y: 940, w: 50, c: "#e00000" },
  { t: "X&YC16@100", x: 356, y: 973, w: 89, c: "#d00000" },
  { t: "ZH2", x: 1613, y: 927, w: 28, c: "#c000c0" },
  { t: "1-", x: 1592, y: 231, w: 18, c: "#ffffff" }, { t: "1-", x: 1594, y: 397, w: 18, c: "#ffffff" },
];

const leaders = [
  { c: "#00d8d8", d: "M350 477.500H476M402.500 454V502" },
  { c: "#00d8d8", d: "M852 506L872 466.500H1010M937.500 443V490" },
  { c: "#00d8d8", d: "M1132 518L1152 454.500H1291M1217.500 430V478" },
  { c: "#00d8d8", d: "M1426 572L1447 532.500H1586M1512.500 508V557" },
  { c: "#00d8d8", d: "M350 912.500H479M405.500 889V937" },
  { c: "#00d8d8", d: "M1601 898.500H1636" },
  { c: "#00d8d8", d: "M1167 178L1173 165" },
];
</script>

<style>
html,
body {
  margin: 0;
  background: #fff;
}
</style>

<style scoped>
.app {
  position: relative;
  width: 1920px;
  height: 1080px;
  overflow: hidden;
  display: flex;
  flex-direction: column;
  font-family: "Noto Sans CJK SC", "Noto Sans", sans-serif;
  font-size: 12px;
  color: #3a3a3a;
  background: #fff;
}
i { display: block; font-style: normal; }
svg { display: block; flex: none; fill: none; stroke: #555; }

/* ---- title + tabs ---- */
.top { position: relative; display: flex; height: 42px; flex: none; }
.logoBox { position: relative; width: 50px; flex: none; }
.logo { position: absolute; left: 7px; top: 3px; width: 32px; height: 32px; }
.logoCaret { position: absolute; left: 39px; top: 34px; border-left: 4px solid transparent; border-bottom: 4px solid #555; }
.topCol { flex: 1; display: flex; flex-direction: column; min-width: 0; }
.quickRow { display: flex; align-items: center; height: 21px; }
.quickCell { display: flex; align-items: center; justify-content: center; height: 20px; flex: none; }
.quickCell.pale { background: #e8f3fc; }
.ic14 { width: 14px; height: 14px; }
.ic16 { width: 17px; height: 17px; }
.ic18 { width: 18px; height: 18px; }
.miniCaret { border-left: 3px solid transparent; border-right: 3px solid transparent; border-top: 3px solid #777; flex: none; }
.appTitle { margin-left: 281px; font-size: 12.500px; color: #333; white-space: nowrap; }
.winBtns { margin-left: auto; display: flex; align-items: center; gap: 24px; padding-right: 12px; }
.winBtns svg { width: 12px; height: 12px; stroke: #555; }

.tabRow { display: flex; align-items: center; height: 20px; gap: 2px; }
.tab { padding: 0 12px; height: 20px; line-height: 19px; border-radius: 10px; font-size: 12px; white-space: nowrap; }
.tab.on { background: #1e90ff; color: #fff; padding: 0 13px; }
.tab.pale { background: #f5f9fd; }
.tabRight { position: absolute; left: 1435px; top: 21px; display: flex; align-items: center; height: 20px; }
.searchBox { width: 319px; height: 18px; box-sizing: border-box; border: 1px solid #e2e2e2; border-radius: 3px; display: flex; align-items: center; justify-content: space-between; padding: 0 8px 0 1px; }
.searchText { white-space: nowrap; font-size: 12px; color: #333; margin-right: 6px; letter-spacing: .28px; }
.ghost { width: 18px; height: 18px; margin-left: 6px; stroke: none; }
.userName { margin-left: 0; width: 36px; }
.chat { margin-left: 16px; }
.help { margin-left: 10px; font-size: 15px; line-height: 20px; color: #444; }
.helpCaret { margin-left: 3px; }
.shirt { margin-left: 1px; }
.fold { margin-left: 4px; }

.promo { position: absolute; left: 1229px; top: 13px; width: 196px; height: 33px; background: #0c8cff; border-radius: 3px; display: flex; align-items: center; color: #fff; padding-left: 7px; box-sizing: border-box; z-index: 3; font-size: 12px; }
.promo::after { content: ""; position: absolute; right: -3px; top: 12px; border-left: 4px solid #0c8cff; border-top: 4px solid transparent; border-bottom: 4px solid transparent; }
.promoBtn { margin-left: 15px; width: 60px; height: 17px; line-height: 17px; text-align: center; background: #3aa3ff; border-radius: 2px; }

/* ---- ribbon ---- */
.ribbon { display: flex; height: 97px; flex: none; border-bottom: 2px solid #e2e2e2; box-sizing: border-box; padding-top: 0; }
.group { position: relative; display: flex; flex-direction: column; box-sizing: border-box; flex: none; }
.group::after { content: ""; position: absolute; right: 0; top: 2px; bottom: 4px; width: 1px; background: #dcdcdc; }
.groupBody { display: flex; height: 73px; padding-top: 1px; box-sizing: border-box; }
.groupLabel { display: flex; justify-content: center; align-items: center; gap: 5px; height: 20px; margin-top: 1px; color: #444; }
.miniCaret.lab { border-top-color: #666; border-left-width: 4px; border-right-width: 4px; border-top-width: 4px; }
.bigBtn { height: 67px; margin-top: 2px; display: flex; flex-direction: column; align-items: center; justify-content: flex-start; gap: 1px; border-radius: 2px; flex: none; }
.bigBtn svg { width: 36px; height: 36px; }
.bigBtn span { line-height: 17px; white-space: nowrap; }
.bigBtn .miniCaret { margin-top: 4px; }
.bigBtn.sel { background: #c3d9f1; }
.ribCol { display: flex; flex-direction: column; flex: none; }
.ribItem { display: flex; align-items: center; height: 23px; padding: 2px 0 2px 2px; box-sizing: border-box; background-clip: content-box; white-space: nowrap; gap: 1px; }
.ribItem.hl1 { background: #eef5fb; border-radius: 2px; }
.ribItem.hl2 { background: #e1eefa; border-radius: 2px; }
.ribItem .miniCaret { margin-left: 4px; }
.ribItem.dis { color: #b5b5b5; }
.ribItem.dis svg { opacity: .55; }

/* ---- pick bar ---- */
.pickBar { display: flex; gap: 4px; height: 27px; flex: none; align-items: center; padding-left: 3px; background: #f0f0f0; box-sizing: border-box; }
.pick { width: 99px; height: 21px; box-sizing: border-box; background: #fff; border: 1px solid #e4e4e4; border-radius: 2px; display: flex; align-items: center; justify-content: space-between; padding: 0 5px 0 3px; }

/* ---- main row ---- */
.mainRow { display: flex; height: 842px; flex: none; background: #fff; }
.strip { height: 12px; flex: none; background: #e4e4e4; display: flex; justify-content: flex-end; align-items: center; padding-right: 4px; border-top: 1px solid #ddd; box-sizing: border-box; }
.closeX { width: 8px; height: 8px; stroke: #999; }
.moreBtn { width: 10px; height: 18px; border: 1px solid #e0e0e0; border-radius: 2px; font-size: 6px; line-height: 18px; text-align: center; color: #777; flex: none; letter-spacing: -1px; }

.nav { width: 62px; flex: none; display: flex; flex-direction: column; border-right: 1px solid #ccc; box-sizing: border-box; }
.navTitle { height: 22px; line-height: 22px; background: #f0f0f0; color: #888; padding-left: 9px; font-size: 12px; flex: none; }
.navTool { height: 27px; flex: none; display: flex; align-items: center; justify-content: space-between; padding: 0 7px 0 7px; border-top: 1px solid #ddd; border-bottom: 1px solid #ddd; box-sizing: border-box; }
.navBody { flex: 1; display: flex; min-height: 0; overflow: hidden; }
.navList { width: 49px; padding-top: 4px; flex: none; }
.navText { position: relative; width: 46px; height: 25px; margin: 0 0 3px 1px; background: #ececec; line-height: 25px; padding-left: 3px; box-sizing: border-box; white-space: nowrap; overflow: visible; color: #333; }
.navText span { display: block; width: 43px; overflow: hidden; }
.redDot { position: absolute; top: -1px; width: 6px; height: 6px; border-radius: 50%; background: #f00; }
.navIcon { width: 47px; height: 25px; margin: 0 0 3px 1px; display: flex; align-items: center; justify-content: center; }
.navIcon svg { width: 20px; height: 20px; stroke: #2b7de0; }
.navIcon.on { background: #d2e6fb; }
.navTrack { flex: 1; padding-top: 15px; }
.navThumb { width: 8px; height: 633px; background: #c8c8c8; border-radius: 4px; }

.leftCol { width: 280px; margin-left: 4px; flex: none; display: flex; flex-direction: column; gap: 5px; }
.panel { display: flex; flex-direction: column; border: 1px solid #d8d8d8; border-top: none; box-sizing: border-box; }
.compPanel { height: 565px; }
.propPanel { height: 272px; border-bottom: none; }
.tabs2 { display: flex; height: 22px; background: #f0f0f0; flex: none; border-bottom: 1px solid #d8d8d8; box-sizing: border-box; }
.t2 { width: 65px; text-align: center; line-height: 21px; background: #e4e4e4; color: #888; border-right: 1px solid #ccc; box-sizing: border-box; }
.t2.on { background: #f0f0f0; color: #222; font-weight: 700; }
.compTool { height: 28px; flex: none; display: flex; align-items: center; padding-left: 4px; border-bottom: 1px solid #e0e0e0; box-sizing: border-box; }
.ctBtn { display: flex; align-items: center; gap: 4px; white-space: nowrap; height: 20px; }
.w53 { width: 66px; } .w58 { width: 58px; } .w55 { width: 54px; } .w82 { width: 84px; }
.compTool .moreBtn { margin-left: 0; }
.compTool .miniCaret { margin-left: 2px; }
.compSearch { height: 19px; flex: none; display: flex; align-items: center; justify-content: space-between; padding: 0 9px 0 2px; color: #aaa; border-bottom: 1px solid #e8e8e8; }
.treeWrap { position: relative; flex: 1; min-height: 0; padding-top: 1px; }
.treeRow { position: relative; height: 24px; padding-left: 43px; display: flex; align-items: center; white-space: nowrap; letter-spacing: .55px; color: #444; }
.treeRow.child { padding-left: 70px; }
.treeRow span { padding: 0 3px; height: 21px; line-height: 21px; margin-left: -3px; }
.treeRow span.sel { background: #c3d9f1; width: 111px; padding-left: 3px; border-radius: 2px; }
.tc { position: absolute; left: 34px; top: 9px; }
.tc.r { border-left: 4px solid #777; border-top: 3.500px solid transparent; border-bottom: 3.500px solid transparent; }
.tc.d { left: 33px; top: 10px; border-top: 4px solid #777; border-left: 3.500px solid transparent; border-right: 3.500px solid transparent; }
.treeThumb { position: absolute; right: 3px; top: 171px; width: 8px; height: 282px; background: #c8c8c8; border-radius: 4px; }

.propWrap { position: relative; flex: 1; min-height: 0; overflow: hidden; }
.propTable { width: 263px; display: flex; flex-direction: column; }
.propRow { display: grid; grid-template-columns: 22px 101px 99px 41px; height: 21px; flex: none; box-sizing: border-box; }
.propRow > span { border-right: 1px solid #dcdcdc; border-bottom: 1px solid #dcdcdc; display: flex; align-items: center; box-sizing: border-box; white-space: nowrap; }
.propRow.head > span { justify-content: center; }
.pIdx { background: #f0f0f0; justify-content: center; }
.propRow .pIdx { justify-content: center; }
.pName { padding-left: 3px; }
.pName.blue { color: #3a54d8; }
.pVal { padding-left: 3px; }
.pVal.grayV { color: #a0a0a0; }
.propRow .pAdd { justify-content: center; }
.plusBox { width: 10px; height: 10px; border: 1px solid #888; border-radius: 2px; font-size: 9px; line-height: 9px; text-align: center; margin: 0 6px 0 1px; color: #555; }
.propThumb { position: absolute; right: 3px; top: 14px; width: 8px; height: 190px; background: #c8c8c8; border-radius: 4px; }

.cb { width: 12px; height: 12px; border: 1px solid #888; border-radius: 2px; background: #fff; position: relative; }
.cb.chk { background: #2d7de0; border-color: #2d7de0; }
.cb.chk::after { content: ""; position: absolute; left: 3px; top: 1px; width: 3px; height: 7px; border: solid #fff; border-width: 0 2px 2px 0; transform: rotate(40deg); }
.cb.part { border-color: #4a8fe0; }
.cb.part::after { content: ""; position: absolute; inset: 1px; background: #8cbcf5; }
.cb.off { background: #f0f0f0; border-color: #bbb; }

.splitter { width: 4px; flex: none; display: flex; align-items: center; background: #fff; }
.splitter i { width: 4px; height: 100px; background: #6b7178; margin-top: -2px; }

/* ---- canvas ---- */
.canvas { position: relative; width: 1286px; height: 843px; flex: none; background: #000; overflow: hidden; }
.cad { position: absolute; inset: 0; width: 1286px; height: 843px; stroke: none; fill: none; }
.cadText { font-family: Inter, Roboto, "Liberation Sans", sans-serif; font-weight: 200; }

.floatBox { position: absolute; left: 0; top: 1px; width: 104px; height: 115px; background: #204d7e; border: 1px solid #2f689f; box-sizing: border-box; display: flex; flex-direction: column; align-items: center; }
.floatHead { width: 100%; height: 12px; line-height: 11px; background: #1d3f66; color: #9fc3e6; font-size: 13px; text-align: right; padding-right: 4px; box-sizing: border-box; font-weight: 700; flex: none; }
.floatBtn { width: 89px; height: 25px; line-height: 24px; margin-top: 7px; background: #285886; border: 1px solid #1d4068; box-sizing: border-box; color: #e8edf4; text-align: center; font-size: 12px; }
.floatBtn + .floatBtn { margin-top: 6px; }
.floatSplit { width: 89px; height: 25px; margin-top: 6px; display: flex; background: #285886; border: 1px solid #1d4068; box-sizing: border-box; color: #e8edf4; line-height: 24px; }
.floatSplit span:first-child { flex: 1; text-align: center; border-right: 1px solid #1d4068; }
.floatArrow { width: 15px; display: flex; align-items: center; justify-content: center; }
.floatArrow i { border-top: 4px solid #fff; border-left: 4px solid transparent; border-right: 4px solid transparent; }

.viewBar { position: absolute; left: 1253px; top: 0; width: 33px; height: 246px; background: #fff; border-radius: 0 0 2px 2px; display: flex; flex-direction: column; align-items: center; padding-top: 10px; box-sizing: border-box; }
.viewBar svg { width: 24px; height: 24px; margin-bottom: 5px; flex: none; }
.viewBar svg.thin { height: 8px; margin-bottom: 2px; }
.viewBar svg.rule { height: 5px; margin-bottom: 0; }

.tip { position: absolute; left: 502px; top: 782px; width: 278px; height: 29px; background: #0094ff; border-radius: 3px; color: #fff; display: flex; align-items: center; padding-left: 7px; box-sizing: border-box; white-space: nowrap; }
.tip::after { content: ""; position: absolute; left: 14px; bottom: -5px; border-top: 5px solid #0094ff; border-left: 5px solid transparent; border-right: 5px solid transparent; }
.tipOff { margin-left: 39px; color: #83c9ff; }
.hint { position: absolute; left: 514px; top: 816px; height: 22px; display: flex; align-items: center; gap: 4px; color: #fff; font-weight: 500; white-space: nowrap; }
.hint svg { width: 15px; height: 15px; }

/* ---- right panel ---- */
.rightPanel { width: 280px; flex: none; display: flex; flex-direction: column; border-left: 1px solid #ccc; border-bottom: 1px solid #ccc; box-sizing: border-box; height: 842px; }
.rpTitle { height: 22px; line-height: 22px; background: #f0f0f0; color: #888; padding-left: 8px; flex: none; font-size: 12.500px; }
.rpTabs { height: 28px; flex: none; display: flex; align-items: flex-end; gap: 3px; padding: 0 0 0 2px; box-sizing: border-box; }
.rpTab { width: 60px; height: 23px; line-height: 22px; text-align: center; background: #e6e6e6; color: #555; border-radius: 3px 3px 0 0; box-sizing: border-box; }
.rpTab.on { background: #fff; color: #2b84e6; border: 1px solid #ccc; border-bottom: none; }
.rpTableBox { position: relative; margin: 0 2px; height: 741px; flex: none; border: 1px solid #d4d4d4; box-sizing: border-box; overflow: hidden; padding-left: 1px; }
.rpTable { width: 257px; display: flex; flex-direction: column; }
.rpRow { display: grid; grid-template-columns: 131px 63px 63px; height: 21px; flex: none; box-sizing: border-box; }
.rpRow > span { border-bottom: 1px solid #d8d8d8; border-right: 1px solid #d8d8d8; box-sizing: border-box; display: flex; align-items: center; white-space: nowrap; }
.rCell { justify-content: center; }
.rpHead { height: 22px; }
.rpHead .rName { justify-content: center; }
.rName { position: relative; color: #333; }
.rName.lv0 { padding-left: 2px; }
.rName.lv1 { padding-left: 12px; }
.rName.lv2 { padding-left: 41px; }
.rName.lv1::before, .rName.lv2::before { content: ""; position: absolute; left: 9px; top: 0; bottom: 0; width: 1px; background: #e0e0e0; }
.rName.lv2::after { content: ""; position: absolute; left: 18px; top: 0; width: 15px; height: 10px; border-left: 1px solid #e0e0e0; border-bottom: 1px solid #e0e0e0; box-sizing: content-box; }
.minusBox { position: relative; width: 11px; height: 11px; border: 1px solid #888; border-radius: 2px; margin-right: 7px; background: #fff; z-index: 1; flex: none; }
.minusBox::after { content: ""; position: absolute; left: 2px; right: 2px; top: 5px; height: 1px; background: #555; }
.rpThumb { position: absolute; right: 3px; top: 14px; width: 8px; height: 172px; background: #c8c8c8; border-radius: 4px; }
.rpFoot { flex: 1; display: flex; justify-content: flex-end; align-items: flex-start; padding: 6px 8px 0 0; }
.resetBtn { width: 90px; height: 26px; line-height: 25px; box-sizing: border-box; text-align: center; border: 1px solid #d0d0d0; border-radius: 3px; color: #444; }

/* ---- footer ---- */
.status { height: 32px; flex: none; background: #fcfcfc; line-height: 31px; padding-left: 6px; font-size: 12.500px; color: #333; }
.taskbar { position: relative; height: 40px; flex: none; display: flex; background: linear-gradient(90deg, #35291f 0%, #3a2a22 35%, #33261f 70%, #37241f 85%, #2c2422 100%); }
.win { position: absolute; left: 16px; top: 12px; width: 16px; height: 16px; stroke: none; }
.tbCell { position: relative; width: 49px; height: 40px; display: flex; align-items: center; justify-content: center; box-sizing: border-box; }
.tbCell:first-of-type { margin-left: 50px; }
.tbCell svg { width: 26px; height: 26px; stroke: none; }
.tbCell.run::after { content: ""; position: absolute; left: 5px; right: 5px; bottom: 0; height: 2px; background: #76b9ed; }
.tbCell.active { background: #5b4a44; }
.tbCell.active::after { left: 0; right: 0; }
.tray { margin-left: auto; display: flex; align-items: center; height: 40px; color: #fff; padding-right: 0; }
.tr { width: 16px; height: 16px; margin-left: 6px; stroke: none; }
.tr.net { margin-left: 9px; }
.ime { margin-left: 9px; font-size: 14px; }
.sogou { width: 18px; height: 18px; margin-left: 13px; stroke: none; }
.clock { width: 80px; margin-left: 6px; display: flex; flex-direction: column; align-items: center; gap: 1px; font-size: 12px; line-height: 18px; color: #eee; }
.notif { width: 18px; height: 18px; margin-left: 6px; stroke: none; }
.peek { width: 1px; height: 40px; margin-left: 24px; background: #6a5a54; }
</style>
